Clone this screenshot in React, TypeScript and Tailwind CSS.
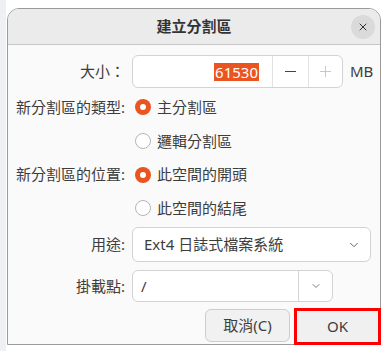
import { ChevronDown, X } from "lucide-react";

const font = { fontFamily: '"Noto Sans", "Noto Sans CJK TC", sans-serif' };

function Radio({ checked, label }: { checked?: boolean; label: string }) {
  return (
    <div className="flex h-full items-center gap-[6px] pl-[3px]">
      {checked ? (
        <span className="flex h-[16px] w-[16px] items-center justify-center rounded-full bg-[#e95420]">
          <span className="h-[6px] w-[6px] rounded-full bg-white" />
        </span>
      ) : (
        <span className="h-[16px] w-[16px] rounded-full border border-[#b5b5b5] bg-white" />
      )}
      <span>{label}</span>
    </div>
  );
}

function Label({ children }: { children: React.ReactNode }) {
  return <div className="flex h-full items-center justify-end">{children}</div>;
}

export default function App() {
  return (
    <div className="flex min-h-[351px] w-[392px] bg-white text-[15px] text-[#3d3d3d]" style={font}>
      <div className="w-[6px] bg-[#eef0f3]" />
      <div className="pt-[8px] pl-[1px]">
        <div className="flex w-[374px] flex-col rounded-t-[12px] border border-[#9a9a9a] bg-[#fafafa]">
          <div className="relative flex h-[36px] items-center justify-center rounded-t-[11px] border-b border-[#c6c6c6] bg-[#ebebeb]">
            <span className="font-bold text-[#333]">建立分割區</span>
            <button className="absolute right-[5px] top-[6px] flex h-[24px] w-[24px] items-center justify-center rounded-full bg-[#dadada]">
              <X className="h-[12px] w-[12px] text-[#333]" strokeWidth={2} />
            </button>
          </div>

          <div className="grid grid-cols-[117px_1fr] gap-x-[7px] pt-[10px]">
            <div className="h-[33px]">
              <Label>大小：</Label>
            </div>
            <div className="flex h-[33px] items-center gap-[7px]">
              <div className="flex h-full w-[211px] items-center rounded-[6px] border border-[#d3d3d3] bg-white">
                <div className="flex h-full flex-1 items-center justify-end pr-[13px]">
                  <span className="bg-[#e95420] px-[1px] leading-[18px] text-white">61530</span>
                </div>
                <div className="flex h-full w-[36px] items-center justify-center border-l border-[#e2e2e2]">
                  <span className="h-[1px] w-[11px] bg-[#444]" />
                </div>
                <div className="relative flex h-full w-[34px] items-center justify-center border-l border-[#e2e2e2]">
                  <span className="h-[1px] w-[11px] bg-[#c8c8c8]" />
                  <span className="absolute h-[11px] w-[1px] bg-[#c8c8c8]" />
                </div>
              </div>
              <span>MB</span>
            </div>

            <div className="mt-[2px] h-[34px]">
              <Label>新分割區的類型:</Label>
            </div>
            <div className="mt-[2px] h-[34px]">
              <Radio checked label="主分割區" />
            </div>
            <div className="h-[34px]" />
            <div className="h-[34px]">
              <Radio label="邏輯分割區" />
            </div>
            <div className="h-[33px]">
              <Label>新分割區的位置:</Label>
            </div>
            <div className="h-[33px]">
              <Radio checked label="此空間的開頭" />
            </div>
            <div className="h-[34px]" />
            <div className="h-[34px]">
              <Radio label="此空間的結尾" />
            </div>

            <div className="mt-[2px] h-[35px]">
              <Label>用途:</Label>
            </div>
            <div className="mt-[2px] flex h-[35px] w-[239px] items-center justify-between rounded-[6px] border border-[#d3d3d3] bg-white pl-[11px] pr-[9px]">
              <span>Ext4 日誌式檔案系統</span>
              <ChevronDown className="h-[14px] w-[14px] text-[#555]" strokeWidth={1.5} />
            </div>

            <div className="mt-[8px] h-[32px]">
              <Label>掛載點:</Label>
            </div>
            <div className="mt-[8px] flex h-[32px] w-[201px] items-center rounded-[6px] border border-[#d3d3d3] bg-white">
              <span className="flex-1 pl-[8px]">/</span>
              <div className="flex h-full w-[34px] items-center justify-center border-l border-[#d3d3d3]">
                <ChevronDown className="h-[12px] w-[12px] text-[#555]" strokeWidth={1.5} />
              </div>
            </div>
          </div>

          <div className="mt-[6px] flex items-start justify-end gap-[4px]">
            <button className="mt-[1px] flex h-[33px] w-[85px] items-center justify-center rounded-[6px] border border-[#cdcdcd] bg-[#f1f1f1]">
              取消(C)
            </button>
            <div className="-mb-[1px] -mr-[1px] flex h-[37px] w-[87px] items-center justify-center border-[3px] border-[#ff0000] bg-[#f0f0f0]">
              OK
            </div>
          </div>
        </div>
      </div>
    </div>
  );
}
